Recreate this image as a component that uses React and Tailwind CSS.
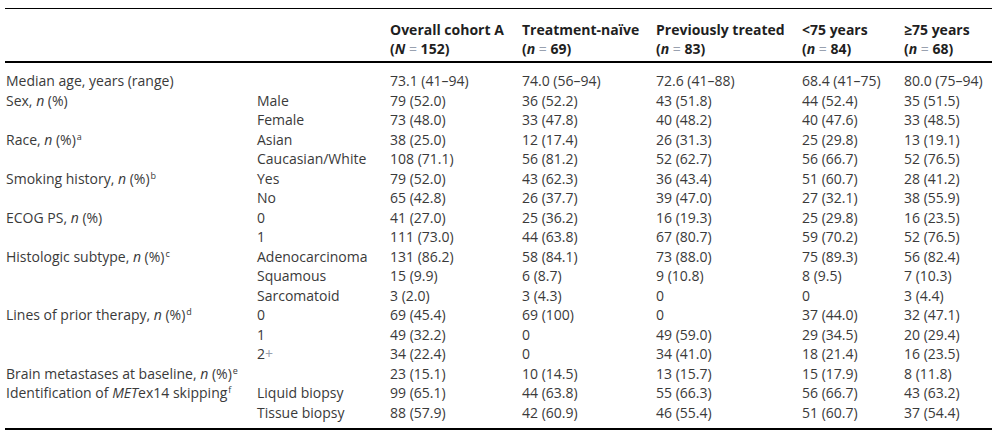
const N = ({ children }) => <i>{children}</i>;

const eq = <span className="font-normal text-gray-400">=</span>;

const cols = [
  { t: "Overall cohort A", s: <><N>N</N> {eq} 152)</> },
  { t: "Treatment-naïve", s: <><N>n</N> {eq} 69)</> },
  { t: "Previously treated", s: <><N>n</N> {eq} 83)</> },
  { t: "<75 years", s: <><N>n</N> {eq} 84)</> },
  { t: "≥75 years", s: <><N>n</N> {eq} 68)</> },
];

const sup = (x) => <sup className="text-[9px] relative -top-[5px] ml-[1px]">{x}</sup>;

const rows = [
  [<>Median age, years (range)</>, "", "73.1 (41–94)", "74.0 (56–94)", "72.6 (41–88)", "68.4 (41–75)", "80.0 (75–94)"],
  [<>Sex, <N>n</N> (%)</>, "Male", "79 (52.0)", "36 (52.2)", "43 (51.8)", "44 (52.4)", "35 (51.5)"],
  ["", "Female", "73 (48.0)", "33 (47.8)", "40 (48.2)", "40 (47.6)", "33 (48.5)"],
  [<>Race, <N>n</N> (%){sup("a")}</>, "Asian", "38 (25.0)", "12 (17.4)", "26 (31.3)", "25 (29.8)", "13 (19.1)"],
  ["", "Caucasian/White", "108 (71.1)", "56 (81.2)", "52 (62.7)", "56 (66.7)", "52 (76.5)"],
  [<>Smoking history, <N>n</N> (%){sup("b")}</>, "Yes", "79 (52.0)", "43 (62.3)", "36 (43.4)", "51 (60.7)", "28 (41.2)"],
  ["", "No", "65 (42.8)", "26 (37.7)", "39 (47.0)", "27 (32.1)", "38 (55.9)"],
  [<>ECOG PS, <N>n</N> (%)</>, "0", "41 (27.0)", "25 (36.2)", "16 (19.3)", "25 (29.8)", "16 (23.5)"],
  ["", "1", "111 (73.0)", "44 (63.8)", "67 (80.7)", "59 (70.2)", "52 (76.5)"],
  [<>Histologic subtype, <N>n</N> (%){sup("c")}</>, "Adenocarcinoma", "131 (86.2)", "58 (84.1)", "73 (88.0)", "75 (89.3)", "56 (82.4)"],
  ["", "Squamous", "15 (9.9)", "6 (8.7)", "9 (10.8)", "8 (9.5)", "7 (10.3)"],
  ["", "Sarcomatoid", "3 (2.0)", "3 (4.3)", "0", "0", "3 (4.4)"],
  [<>Lines of prior therapy, <N>n</N> (%){sup("d")}</>, "0", "69 (45.4)", "69 (100)", "0", "37 (44.0)", "32 (47.1)"],
  ["", "1", "49 (32.2)", "0", "49 (59.0)", "29 (34.5)", "20 (29.4)"],
  ["", <>2<span className="text-gray-400">+</span></>, "34 (22.4)", "0", "34 (41.0)", "18 (21.4)", "16 (23.5)"],
  [<>Brain metastases at baseline, <N>n</N> (%){sup("e")}</>, "", "23 (15.1)", "10 (14.5)", "13 (15.7)", "15 (17.9)", "8 (11.8)"],
  [<>Identification of <N>MET</N>ex14 skipping{sup("f")}</>, "Liquid biopsy", "99 (65.1)", "44 (63.8)", "55 (66.3)", "56 (66.7)", "43 (63.2)"],
  ["", "Tissue biopsy", "88 (57.9)", "42 (60.9)", "46 (55.4)", "51 (60.7)", "37 (54.4)"],
];

const grid = "grid grid-cols-[251px_133px_132px_134px_146px_102px_88px]";

export default function App() {
  return (
    <div className="w-[999px] h-[436px] bg-white pt-[8px] pl-[5px] font-['Open_Sans',sans-serif] text-[14px] text-[#3a3a3a]">
      <div className="w-[987px] border-t border-black">
        {/* header */}
        <div className={`${grid} pt-[11px] pb-[3px] pl-[1px] leading-[19px] font-bold text-[#1f1f1f] border-b-2 border-black`}>
          <div />
          <div />
          {cols.map((c, i) => (
            <div key={i} className="whitespace-nowrap">
              <div>{c.t}</div>
              <div>({c.s}</div>
            </div>
          ))}
        </div>

        {/* body */}
        <div className="pt-[8px] pb-[6px] pl-[1px] border-b-2 border-black">
          {rows.map((r, i) => (
            <div key={i} className={`${grid} h-[19.5px] leading-[19.5px] whitespace-nowrap`}>
              {r.map((cell, j) => (
                <div key={j}>{cell}</div>
              ))}
            </div>
          ))}
        </div>
      </div>
    </div>
  );
}
